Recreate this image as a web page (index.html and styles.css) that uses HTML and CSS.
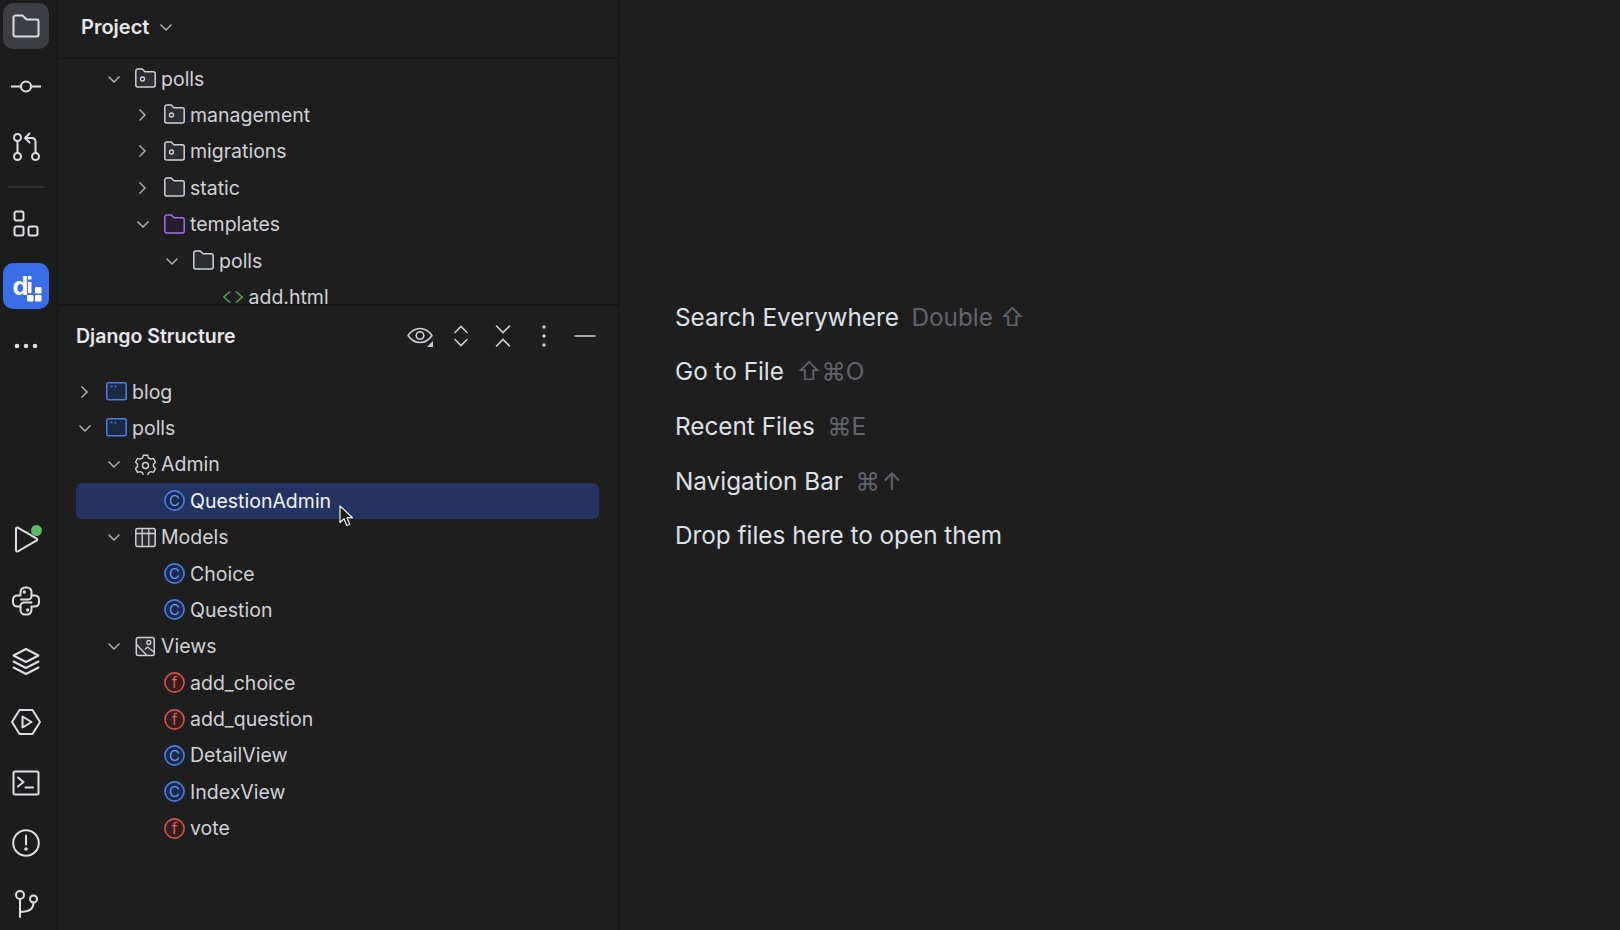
FILE: index.html
```html
<!DOCTYPE html>
<html lang="en">
<head>
<meta charset="utf-8">
<title>Django Structure</title>
<link rel="stylesheet" href="styles.css">
</head>
<body>
<svg class="defs" width="0" height="0" aria-hidden="true">
  <symbol id="chev-d" viewBox="0 0 16 16"><path d="M3.500 5.500 9 11l5.500-5.500" fill="none" stroke="currentColor" stroke-width="1.400"/></symbol>
  <symbol id="chev-r" viewBox="0 0 16 16"><path d="M5.500 2.500 11 8l-5.500 5.500" fill="none" stroke="currentColor" stroke-width="1.400"/></symbol>
  <symbol id="folder" viewBox="0 0 21 21"><path d="M.8 3a2 2 0 0 1 2-2h4.400L10 3.800h8.200a2 2 0 0 1 2 2V17a2 2 0 0 1-2 2H2.800a2 2 0 0 1-2-2z" fill="#2b2d30" stroke="#d0d2d5" stroke-width="1.500"/></symbol>
  <symbol id="folder-mod" viewBox="0 0 21 21"><path d="M.8 3a2 2 0 0 1 2-2h4.400L10 3.800h8.200a2 2 0 0 1 2 2V17a2 2 0 0 1-2 2H2.800a2 2 0 0 1-2-2z" fill="#2b2d30" stroke="#d0d2d5" stroke-width="1.500"/><circle cx="7.500" cy="11" r="2" fill="none" stroke="#d0d2d5" stroke-width="1.300"/></symbol>
  <symbol id="folder-tpl" viewBox="0 0 21 21"><path d="M.8 3a2 2 0 0 1 2-2h4.400L10 3.800h8.200a2 2 0 0 1 2 2V17a2 2 0 0 1-2 2H2.800a2 2 0 0 1-2-2z" fill="#231d2d" stroke="#a571e6" stroke-width="1.500"/></symbol>
  <symbol id="pkg" viewBox="0 0 21 21"><rect x=".8" y="1.800" width="19.400" height="17" rx="2" fill="#1b2942" stroke="#4b80e8" stroke-width="1.500"/><path d="M4.500 5.500h2M8.500 5.500h2" stroke="#4b80e8" stroke-width="1.300"/></symbol>
  <symbol id="cls" viewBox="0 0 21 21"><circle cx="10.500" cy="10.500" r="9.600" fill="#1b2a4c" stroke="#4b80e8" stroke-width="1.600"/></symbol>
  <symbol id="fn" viewBox="0 0 21 21"><circle cx="10.500" cy="10.500" r="9.600" fill="#341d1e" stroke="#d9534f" stroke-width="1.600"/></symbol>
  <symbol id="gear" viewBox="0 0 21 21"><path d="M8.300 1.200h4.400l.7 2.700 2.300 1.300 2.700-.8 2.100 3.800-2 1.900v2.600l2 1.900-2.100 3.800-2.700-.8-2.300 1.300-.7 2.700H8.300l-.7-2.700-2.300-1.300-2.700.8L.5 14.600l2-1.900v-2.600l-2-1.900 2.100-3.800 2.700.8 2.300-1.300z" fill="none" stroke="#d0d2d5" stroke-width="1.400" stroke-linejoin="round"/><circle cx="10.500" cy="11.500" r="3" fill="none" stroke="#d0d2d5" stroke-width="1.400"/></symbol>
  <symbol id="table" viewBox="0 0 21 21"><rect x=".8" y="1.500" width="19.400" height="18" rx="2" fill="#2b2d30" stroke="#d0d2d5" stroke-width="1.500"/><path d="M1 6.500h19M7.200 1.500v18M13.800 1.500v18" stroke="#d0d2d5" stroke-width="1.300"/></symbol>
  <symbol id="image" viewBox="0 0 21 21"><rect x="1.300" y="1.500" width="18" height="18" rx="2" fill="#2b2d30" stroke="#d0d2d5" stroke-width="1.500"/><path d="M1.500 8.500l10 10.500M10 13.500l2.500-2.500 6.500 5" fill="none" stroke="#d0d2d5" stroke-width="1.300"/><circle cx="13.800" cy="6.500" r="2" fill="none" stroke="#d0d2d5" stroke-width="1.300"/></symbol>
  <symbol id="html" viewBox="0 0 22 14"><path d="M8 1.500 1.800 7 8 12.500M14 1.500 20.200 7 14 12.500" fill="none" stroke="#5ea35c" stroke-width="1.500"/></symbol>
</svg>

<div class="ide">
  <nav class="rail">
    <div class="rail-group">
      <div class="rail-btn active">
        <svg class="ri" viewBox="0 0 30 30"><path d="M2.500 6.500a2 2 0 0 1 2-2h7l4 4h10a2 2 0 0 1 2 2v13a2 2 0 0 1-2 2h-21a2 2 0 0 1-2-2z"/></svg>
      </div>
      <div class="rail-btn">
        <svg class="ri" viewBox="0 0 30 30"><circle cx="15" cy="14.500" r="5"/><path d="M0 14.500h10M20 14.500h10"/></svg>
      </div>
      <div class="rail-btn">
        <svg class="ri" viewBox="0 0 30 30"><circle cx="6.500" cy="5.500" r="3.500"/><circle cx="6.500" cy="24.500" r="3.500"/><circle cx="24.500" cy="24.500" r="3.500"/><path d="M6.500 9v12M24.500 21V9.500a3.500 3.500 0 0 0-3.500-3.500h-6M18.500 1.500 14 6l4.500 4.500"/></svg>
      </div>
      <div class="rail-sep"></div>
      <div class="rail-btn">
        <svg class="ri" viewBox="0 0 30 30"><rect x="3.500" y="1.500" width="9" height="9" rx="2"/><rect x="3.500" y="16.500" width="9" height="9" rx="2"/><rect x="17.500" y="16.500" width="9" height="9" rx="2"/></svg>
      </div>
      <div class="rail-btn django">
        <svg class="ri-logo" viewBox="0 0 46 46">
          <text x="9.500" y="32" class="logo-d">d</text>
          <rect x="25" y="13" width="3.500" height="3.500" fill="#fff"/>
          <rect x="25" y="19" width="3.500" height="11" fill="#fff"/>
          <rect x="32" y="24" width="6.500" height="6.500" rx="1.200" fill="#fff"/>
          <rect x="24" y="32" width="6.500" height="6.500" rx="1.200" fill="#fff"/>
          <rect x="32" y="32" width="6.500" height="6.500" rx="1.200" fill="#fff"/>
        </svg>
      </div>
      <div class="rail-btn">
        <svg class="ri ri-fill" viewBox="0 0 30 30"><circle cx="6" cy="15" r="2.300"/><circle cx="15" cy="15" r="2.300"/><circle cx="24" cy="15" r="2.300"/></svg>
      </div>
    </div>
    <div class="rail-group">
      <div class="rail-btn">
        <svg class="ri" viewBox="0 0 30 30"><path d="M5 4.200a1.200 1.200 0 0 1 1.800-1l19 11a1 1 0 0 1 0 1.700l-19 11a1.200 1.200 0 0 1-1.800-1z" transform="translate(0 -.5)"/></svg>
        <span class="run-dot"></span>
      </div>
      <div class="rail-btn">
        <svg class="ri" viewBox="0 0 30 30"><path d="M10 13.500h7a3.500 3.500 0 0 0 3.500-3.500V6a4.500 4.500 0 0 0-4.500-4.500h-2A4.500 4.500 0 0 0 9.500 6v3.500H6A4.500 4.500 0 0 0 2 14v2a4.500 4.500 0 0 0 4 4.500h3.500V20a3.500 3.500 0 0 1 3.500-3.500h7"/><path d="M20 16.500h.5m0-7H24a4.500 4.500 0 0 1 4 4.500v2a4.500 4.500 0 0 1-4 4.500h-3.500V24a4.500 4.500 0 0 1-4.500 4.500h-2A4.500 4.500 0 0 1 9.500 24v-3.500"/><circle cx="13.300" cy="6" r=".7"/><circle cx="16.700" cy="24" r=".7"/></svg>
      </div>
      <div class="rail-btn">
        <svg class="ri" viewBox="0 0 30 30"><path d="M15 2 27.500 8.500 15 15 2.500 8.500z"/><path d="M2.500 14.500 15 21l12.500-6.500M2.500 20.500 15 27l12.500-6.500"/></svg>
      </div>
      <div class="rail-btn">
        <svg class="ri" viewBox="0 0 30 30"><path d="M8.500 3h13L29 15l-7.500 12h-13L1 15z"/><path d="M11.500 9.500v11l9-5.500z"/></svg>
      </div>
      <div class="rail-btn">
        <svg class="ri" viewBox="0 0 30 30"><rect x="2.500" y="3.500" width="25" height="23" rx="1.500"/><path d="M7 9.500l5.500 4.500L7 18.500M14.500 19.500H22"/></svg>
      </div>
      <div class="rail-btn">
        <svg class="ri" viewBox="0 0 30 30"><circle cx="15" cy="15" r="12.800"/><path d="M15 7.500v9"/><circle cx="15" cy="21" r=".8"/></svg>
      </div>
      <div class="rail-btn">
        <svg class="ri" viewBox="0 0 30 30"><circle cx="9" cy="6" r="4"/><circle cx="22.500" cy="10" r="3.500"/><path d="M9 10v18M9 23c8 0 13.500-2.500 13.500-9.500"/></svg>
      </div>
    </div>
  </nav>

  <aside class="side">
    <section class="project">
      <header class="project-head">
        <span class="project-title">Project</span>
        <svg class="mini"><use href="#chev-d"/></svg>
      </header>
      <div class="tree tree-clip">
        <div class="row d1"><svg class="chev"><use href="#chev-d"/></svg><svg class="ic"><use href="#folder-mod"/></svg><span>polls</span></div>
        <div class="row d2"><svg class="chev"><use href="#chev-r"/></svg><svg class="ic"><use href="#folder-mod"/></svg><span>management</span></div>
        <div class="row d2"><svg class="chev"><use href="#chev-r"/></svg><svg class="ic"><use href="#folder-mod"/></svg><span>migrations</span></div>
        <div class="row d2"><svg class="chev"><use href="#chev-r"/></svg><svg class="ic"><use href="#folder"/></svg><span>static</span></div>
        <div class="row d2"><svg class="chev"><use href="#chev-d"/></svg><svg class="ic"><use href="#folder-tpl"/></svg><span>templates</span></div>
        <div class="row d3"><svg class="chev"><use href="#chev-d"/></svg><svg class="ic"><use href="#folder"/></svg><span>polls</span></div>
        <div class="row d4"><span class="chev"></span><svg class="ic ic-html"><use href="#html"/></svg><span>add.html</span></div>
      </div>
    </section>

    <section class="structure">
      <header class="structure-head">
        <span class="structure-title">Django Structure</span>
        <div class="tools">
          <svg class="tool" viewBox="0 0 28 28"><path d="M2 13.500C5.500 8.500 9.500 6.500 14 6.500s8.500 2 12 7c-3.500 5-7.500 7-12 7s-8.500-2-12-7z"/><circle cx="14" cy="13.500" r="3.800"/><path class="solid" d="M27 19v6h-6z"/></svg>
          <svg class="tool" viewBox="0 0 28 28"><path d="M8 10.500l6-6 6 6M8 17.500l6 6 6-6"/></svg>
          <svg class="tool" viewBox="0 0 28 28"><path d="M7.500 4l6.500 6.500L20.500 4M7.500 24l6.500-6.500L20.500 24"/></svg>
          <svg class="tool" viewBox="0 0 28 28"><circle class="solid" cx="14" cy="5" r="1.700"/><circle class="solid" cx="14" cy="14" r="1.700"/><circle class="solid" cx="14" cy="23" r="1.700"/></svg>
          <svg class="tool" viewBox="0 0 28 28"><path d="M4 14h20"/></svg>
        </div>
      </header>
      <div class="tree">
        <div class="row d0"><svg class="chev"><use href="#chev-r"/></svg><svg class="ic"><use href="#pkg"/></svg><span>blog</span></div>
        <div class="row d0"><svg class="chev"><use href="#chev-d"/></svg><svg class="ic"><use href="#pkg"/></svg><span>polls</span></div>
        <div class="row d1"><svg class="chev"><use href="#chev-d"/></svg><svg class="ic"><use href="#gear"/></svg><span>Admin</span></div>
        <div class="row d2 selected"><span class="chev"></span><svg class="ic" viewBox="0 0 21 21"><use href="#cls"/><text x="10.500" y="15.600" class="glyph glyph-c">C</text></svg><span>QuestionAdmin</span>
          <svg class="cursor" viewBox="0 0 15 22"><path d="M1 1v16.500l4-3.800 2.800 6.800 3-1.300L8 12.700h5.500z" fill="#1a1a1a" stroke="#f2f2f2" stroke-width="1.200" stroke-linejoin="round"/></svg>
        </div>
        <div class="row d1"><svg class="chev"><use href="#chev-d"/></svg><svg class="ic"><use href="#table"/></svg><span>Models</span></div>
        <div class="row d2"><span class="chev"></span><svg class="ic" viewBox="0 0 21 21"><use href="#cls"/><text x="10.500" y="15.600" class="glyph glyph-c">C</text></svg><span>Choice</span></div>
        <div class="row d2"><span class="chev"></span><svg class="ic" viewBox="0 0 21 21"><use href="#cls"/><text x="10.500" y="15.600" class="glyph glyph-c">C</text></svg><span>Question</span></div>
        <div class="row d1"><svg class="chev"><use href="#chev-d"/></svg><svg class="ic"><use href="#image"/></svg><span>Views</span></div>
        <div class="row d2"><span class="chev"></span><svg class="ic" viewBox="0 0 21 21"><use href="#fn"/><text x="10.500" y="16" class="glyph glyph-f">f</text></svg><span>add_choice</span></div>
        <div class="row d2"><span class="chev"></span><svg class="ic" viewBox="0 0 21 21"><use href="#fn"/><text x="10.500" y="16" class="glyph glyph-f">f</text></svg><span>add_question</span></div>
        <div class="row d2"><span class="chev"></span><svg class="ic" viewBox="0 0 21 21"><use href="#cls"/><text x="10.500" y="15.600" class="glyph glyph-c">C</text></svg><span>DetailView</span></div>
        <div class="row d2"><span class="chev"></span><svg class="ic" viewBox="0 0 21 21"><use href="#cls"/><text x="10.500" y="15.600" class="glyph glyph-c">C</text></svg><span>IndexView</span></div>
        <div class="row d2"><span class="chev"></span><svg class="ic" viewBox="0 0 21 21"><use href="#fn"/><text x="10.500" y="16" class="glyph glyph-f">f</text></svg><span>vote</span></div>
      </div>
    </section>
  </aside>

  <main class="editor">
    <ul class="hints">
      <li>Search Everywhere <kbd>Double ⇧</kbd></li>
      <li>Go to File <kbd>⇧⌘O</kbd></li>
      <li>Recent Files <kbd>⌘E</kbd></li>
      <li>Navigation Bar <kbd class="wide">⌘↑</kbd></li>
      <li>Drop files here to open them</li>
    </ul>
  </main>
</div>
</body>
</html>
```

FILE: styles.css
```css
* { box-sizing: border-box; }

html, body {
  margin: 0;
  height: 100%;
  overflow: hidden;
  background: #1e1e1e;
}

body {
  font-family: Inter, "Liberation Sans", sans-serif;
  color: #d3d5d8;
}

.defs { position: absolute; }

.ide {
  display: flex;
  height: 930px;
  width: 1620px;
}

/* left rail */
.rail {
  width: 58px;
  flex: none;
  display: flex;
  flex-direction: column;
  justify-content: space-between;
  padding: 3px 0;
  background: #1c1c1c;
  border-right: 1px solid #141517;
}

.rail-group {
  display: flex;
  flex-direction: column;
  gap: 14.600px;
}

.rail-btn {
  position: relative;
  width: 46px;
  height: 46px;
  margin-left: 3px;
  display: flex;
  align-items: center;
  justify-content: center;
  border-radius: 10px;
}

.rail-btn.active { background: #3c3e44; }
.rail-btn.django { background: #3a6ee8; }

.rail-sep {
  height: 2px;
  width: 36px;
  margin: 0.800px 0 0 8px;
  background: #2e3033;
}

.ri {
  width: 30px;
  height: 30px;
  fill: none;
  stroke: #dcdee1;
  stroke-width: 2;
  stroke-linecap: round;
  stroke-linejoin: round;
}

.ri-fill { fill: #dcdee1; stroke: none; }

.ri-logo { width: 46px; height: 46px; }

.logo-d {
  font-family: Inter, sans-serif;
  font-size: 25px;
  font-weight: 700;
  fill: #fff;
}

.run-dot {
  position: absolute;
  top: 8px;
  left: 28px;
  width: 11px;
  height: 11px;
  border-radius: 50%;
  background: #5fb865;
}

/* side panels */
.side {
  width: 561px;
  flex: none;
  display: flex;
  flex-direction: column;
  background: #1e1e1e;
  border-right: 1px solid #141517;
}

.project { flex: none; }

.project-head {
  height: 59px;
  display: flex;
  align-items: center;
  padding: 0 0 5px 23px;
  gap: 8px;
  border-bottom: 1px solid #151515;
}

.project-title {
  font-size: 20px;
  font-weight: 600;
  color: #e6e7e9;
}

.mini {
  width: 16px;
  height: 16px;
  color: #b6b8bc;
}

.tree-clip {
  height: 247px;
  margin: 0;
  padding: 1.400px 19px 0 18px;
  border-bottom: 2px solid #151618;
}

.tree {
  display: flex;
  flex-direction: column;
}

.structure > .tree { margin: 0 19px 0 18px; }

.row {
  position: relative;
  height: 36.400px;
  flex: none;
  display: flex;
  align-items: center;
  font-size: 19.500px;
  color: #d0d2d6;
  white-space: nowrap;
}

.d0 { padding-left: 0; }
.d1 { padding-left: 29px; }
.d2 { padding-left: 58px; }
.d3 { padding-left: 87px; }
.d4 { padding-left: 116px; }

.chev {
  width: 16px;
  height: 16px;
  flex: none;
  margin-right: 14px;
  color: #b6b8bc;
}

.ic {
  width: 21px;
  height: 21px;
  flex: none;
  margin-right: 5px;
}

.ic-html {
  width: 22px;
  height: 14px;
  margin-right: 4.500px;
}

.glyph {
  font-family: Inter, sans-serif;
  text-anchor: middle;
}

.glyph-c { fill: #6b9bf5; font-size: 15px; }
.glyph-f { fill: #e2625e; font-size: 15px; }

.row.selected {
  background: #233463;
  border-radius: 6px;
  color: #f2f3f5;
}

.cursor {
  position: absolute;
  left: 263px;
  top: 22px;
  width: 15px;
  height: 22px;
}

.structure { flex: 1; }

.structure-head {
  height: 60px;
  display: flex;
  align-items: center;
  justify-content: space-between;
  padding: 0 18px;
  margin-bottom: 7.400px;
}

.structure-title {
  font-size: 19.500px;
  font-weight: 600;
  color: #e6e7e9;
}

.tools {
  display: flex;
  gap: 13.200px;
  margin-right: 1px;
}

.tool {
  width: 28px;
  height: 28px;
  fill: none;
  stroke: #d0d2d5;
  stroke-width: 1.600;
  stroke-linecap: round;
}

.tool .solid { fill: #d0d2d5; stroke: none; }

/* editor empty state */
.editor {
  flex: 1;
  background: #1e1e1e;
  padding: 289.500px 0 0 56px;
}

.hints {
  list-style: none;
  margin: 0;
  padding: 0;
  display: flex;
  flex-direction: column;
}

.hints li {
  height: 54.600px;
  display: flex;
  align-items: center;
  gap: 12.500px;
  font-size: 24.300px;
  color: #dfe1e4;
  white-space: nowrap;
}

kbd {
  font-family: Inter, "DejaVu Sans", sans-serif;
  font-size: 24.300px;
  color: #62656b;
}

kbd.wide { letter-spacing: 2px; }
```
